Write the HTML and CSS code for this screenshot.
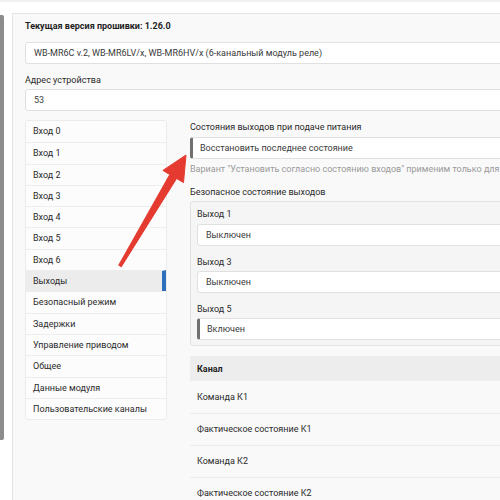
FILE: index.html
```html
<!DOCTYPE html>
<html lang="ru">
<head>
    <meta charset="UTF-8">
    <meta name="viewport" content="width=device-width, initial-scale=1.0">
    <title>WB-MR6C — настройки</title>
    <link rel="stylesheet" href="styles.css">
</head>
<body>
    <div class="topbar"></div>
    <div class="page">
        <div class="rail"><div class="rail-thumb"></div></div>
        <div class="panel">
            <div class="fw-version">Текущая версия прошивки: 1.26.0</div>
            <div class="field-input">WB-MR6C v.2, WB-MR6LV/x, WB-MR6HV/x (6-канальный модуль реле)</div>
            <div class="field-label">Адрес устройства</div>
            <div class="field-input">53</div>

            <div class="editor">
                <ul class="nav">
                    <li class="nav-item">Вход 0</li>
                    <li class="nav-item">Вход 1</li>
                    <li class="nav-item">Вход 2</li>
                    <li class="nav-item">Вход 3</li>
                    <li class="nav-item">Вход 4</li>
                    <li class="nav-item">Вход 5</li>
                    <li class="nav-item">Вход 6</li>
                    <li class="nav-item active">Выходы</li>
                    <li class="nav-item">Безопасный режим</li>
                    <li class="nav-item">Задержки</li>
                    <li class="nav-item">Управление приводом</li>
                    <li class="nav-item">Общее</li>
                    <li class="nav-item">Данные модуля</li>
                    <li class="nav-item">Пользовательские каналы</li>
                </ul>

                <div class="content">
                    <div class="field-label">Состояния выходов при подаче питания</div>
                    <div class="field-input marked">Восстановить последнее состояние</div>
                    <div class="help">Вариант "Установить согласно состоянию входов" применим только для</div>

                    <div class="field-label group-title">Безопасное состояние выходов</div>
                    <div class="group">
                        <div class="field-label">Выход 1</div>
                        <div class="field-input">Выключен</div>
                        <div class="field-label">Выход 3</div>
                        <div class="field-input">Выключен</div>
                        <div class="field-label">Выход 5</div>
                        <div class="field-input marked">Включен</div>
                    </div>

                    <table class="channels">
                        <thead>
                            <tr><th>Канал</th></tr>
                        </thead>
                        <tbody>
                            <tr><td>Команда К1</td></tr>
                            <tr><td>Фактическое состояние К1</td></tr>
                            <tr><td>Команда К2</td></tr>
                            <tr><td>Фактическое состояние К2</td></tr>
                        </tbody>
                    </table>
                </div>
            </div>
        </div>
    </div>

    <!-- red callout arrow drawn on top of the form -->
    <svg class="callout" width="500" height="500" viewBox="0 0 500 500">
        <polygon fill="#e53a2f" stroke="#e53a2f" stroke-width="1" stroke-linejoin="round"
                 points="186,155 183.5,182.6 176.6,178.5 121.3,266.8 118.7,265.2 169.8,174.5 162.9,170.4"/>
    </svg>
</body>
</html>
```

FILE: styles.css
```css
* {
    margin: 0;
    padding: 0;
    box-sizing: border-box;
}

body {
    width: 500px;
    height: 500px;
    overflow: hidden;
    background: #fff;
    font-family: Roboto, "Noto Sans", sans-serif;
    font-size: 9px;
    color: #2b2b2b;
    position: relative;
}

.topbar {
    height: 2px;
    background: #f1f1f1;
}

.page {
    display: flex;
    width: 760px;
    padding-top: 11px;
}

.rail {
    width: 12px;
    flex-shrink: 0;
}

.rail-thumb {
    width: 4px;
    height: 425px;
    margin-top: 2px;
    background: #8c8c8c;
    border-radius: 0 2px 2px 0;
}

.panel {
    flex: 1;
    min-height: 500px;
    background: #f9f9f9;
    border-top: 1px solid #e4e4e4;
    border-left: 1px solid #e4e4e4;
    padding: 4px 12px 0 12px;
}

.fw-version {
    font-weight: bold;
    line-height: 16px;
    color: #1e1e1e;
    margin-bottom: 8px;
}

.field-label {
    line-height: 16px;
    margin-top: 8px;
    margin-bottom: 1px;
    color: #2b2b2b;
}

.field-input {
    height: 22px;
    line-height: 20px;
    background: #fff;
    border: 1px solid #e0e0e0;
    border-radius: 3px;
    padding: 0 8px;
    color: #3a3a3a;
    white-space: nowrap;
}

.field-input.marked {
    border-left: 3px solid #707070;
    padding-left: 7px;
}

.editor {
    display: flex;
    gap: 23px;
    margin-top: 9px;
}

.nav {
    list-style: none;
    width: 142px;
    flex-shrink: 0;
    align-self: flex-start;
    background: #fcfcfc;
    border: 1px solid #ececec;
    border-radius: 3px;
}

.nav-item {
    height: 21.3px;
    line-height: 20px;
    padding-left: 7px;
    border-top: 1px solid #eeeeee;
    color: #2b2b2b;
    white-space: nowrap;
}

.nav-item:first-child {
    border-top: none;
}

.nav-item.active {
    background: #ececec;
    border-right: 4px solid #2d6fba;
}

.content {
    flex: 1;
}

.content > .field-label:first-child {
    margin-top: 0;
    line-height: 15px;
    margin-bottom: 2px;
}

.help {
    line-height: 16px;
    margin-top: 2px;
    color: #999;
    white-space: nowrap;
}

.group-title {
    margin-top: 7px;
}

.group {
    background: #f5f5f5;
    border: 1px solid #e2e2e2;
    border-radius: 3px;
    padding: 4px 6px 5px 6px;
    margin-top: 1px;
}

.group .field-label:first-child {
    margin-top: 0;
    margin-bottom: 2px;
}

.channels {
    width: 100%;
    border-collapse: collapse;
    margin-top: 10px;
}

.channels th {
    text-align: left;
    font-weight: bold;
    color: #1e1e1e;
    background: #ededed;
    height: 25px;
    padding: 0 7px;
}

.channels td {
    height: 32px;
    padding: 0 7px;
    border-bottom: 1px solid #ececec;
    color: #2b2b2b;
}

.callout {
    position: absolute;
    top: 0;
    left: 0;
    pointer-events: none;
}
```
